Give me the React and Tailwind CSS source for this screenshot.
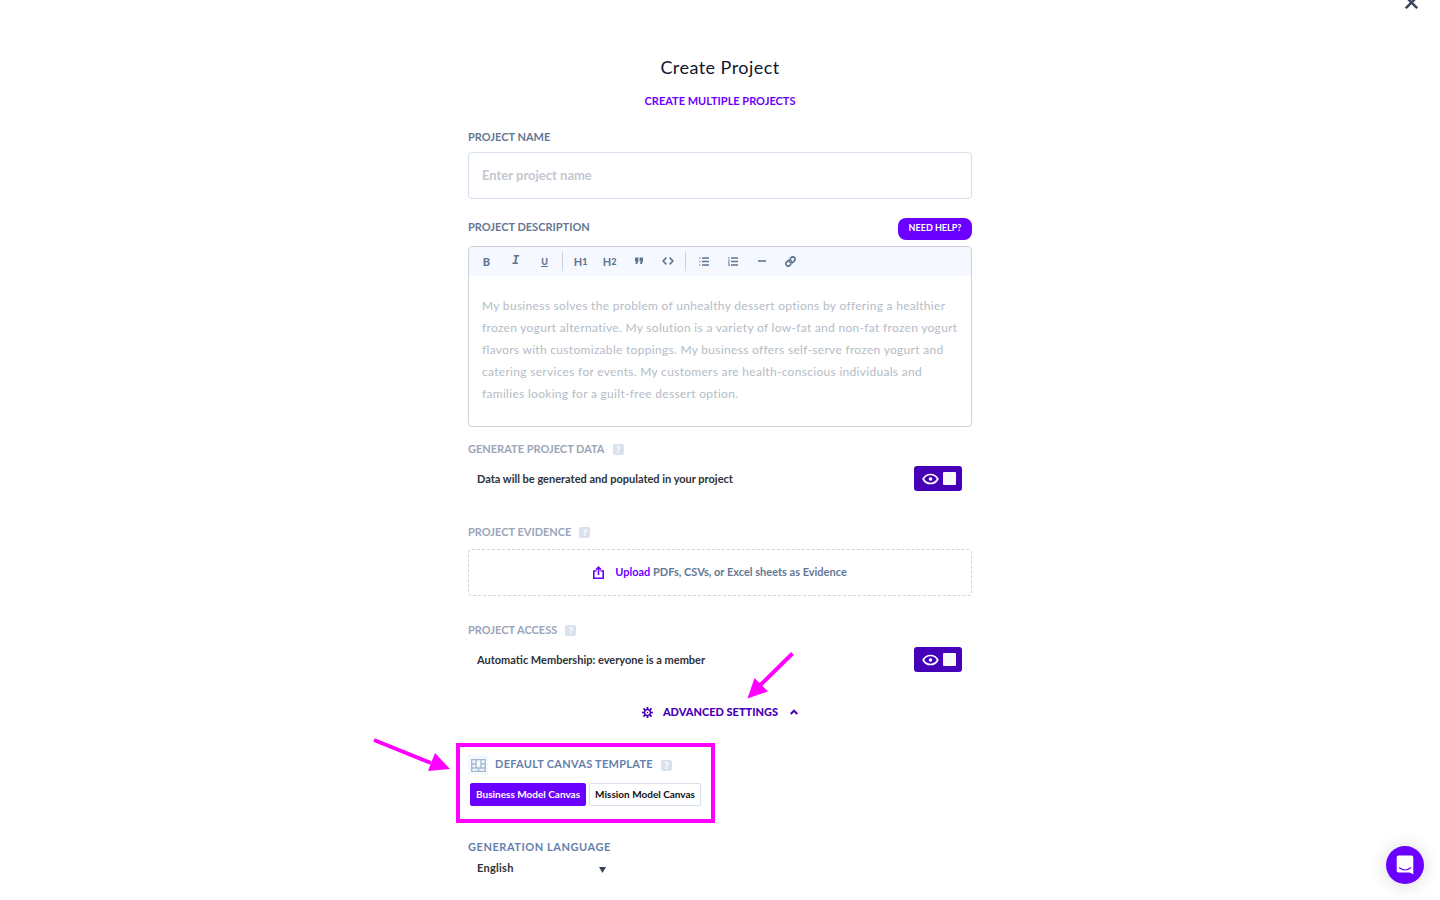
import { useState } from 'react';

const DESCRIPTION_HINT = [
  'My business solves the problem of unhealthy dessert options by offering a healthier',
  'frozen yogurt alternative. My solution is a variety of low-fat and non-fat frozen yogurt',
  'flavors with customizable toppings. My business offers self-serve frozen yogurt and',
  'catering services for events. My customers are health-conscious individuals and',
  'families looking for a guilt-free dessert option.',
].join('\n');

function HelpBadge({ topic }) {
  return (
    <button type="button" aria-label={`Help: ${topic}`} className="flex size-[11px] items-center justify-center rounded-[2px] bg-[#d9e2ec] text-[10px] leading-none font-black text-white">
      ?
    </button>
  );
}

function ToolButton({ label, children }) {
  return (
    <button type="button" aria-label={label} className="flex h-7 w-[29px] items-center justify-center text-[11px] leading-none font-bold text-[#5e7490]">
      {children}
    </button>
  );
}

function Divider() {
  return <div className="mx-[3px] h-[19px] w-px bg-[#cbd2dc]" />;
}

function Toolbar() {
  return (
    <div className="flex h-[29px] items-center rounded-t bg-[#f5f9ff] pb-px pl-[3px]">
      <ToolButton label="Bold"><span className="font-black">B</span></ToolButton>
      <ToolButton label="Italic"><span className="font-['Liberation_Mono'] text-[12px] leading-[14px] italic">I</span></ToolButton>
      <ToolButton label="Underline"><span className="text-[9px] font-black underline underline-offset-1">U</span></ToolButton>
      <Divider />
      <ToolButton label="Heading 1">H<span className="text-[9px] leading-[13px] font-black">1</span></ToolButton>
      <ToolButton label="Heading 2">H<span className="text-[9px] leading-[13px] font-black">2</span></ToolButton>
      <ToolButton label="Quote">
        <svg width="10" height="8" viewBox="0 0 10 8" fill="currentColor">
          <path d="M1 0.5h3.4v3.7L3.2 7H1.3l0.9-2.6H1zM5.6 0.5H9v3.7L7.8 7H5.9l0.9-2.6H5.6z" />
        </svg>
      </ToolButton>
      <ToolButton label="Code">
        <svg width="12" height="8" viewBox="0 0 12 8" fill="none" stroke="currentColor" strokeWidth="1.6">
          <path d="M4.4 0.6L1.1 4l3.3 3.4M7.6 0.6L10.9 4L7.6 7.4" />
        </svg>
      </ToolButton>
      <Divider />
      <ToolButton label="Bulleted list">
        <svg width="10" height="9" viewBox="0 0 10 9" stroke="currentColor" strokeWidth="1.4">
          <path d="M3 1h7M3 4.5h7M3 8h7" />
          <path d="M0 1h1.4M0 4.5h1.4M0 8h1.4" opacity="0.6" />
        </svg>
      </ToolButton>
      <ToolButton label="Numbered list">
        <svg width="10" height="9" viewBox="0 0 10 9" fill="none" stroke="currentColor" strokeWidth="1.4">
          <path d="M3 1h7M3 4.5h7M3 8h7" />
          <path d="M0 0.4h1v2M0 3.4h1.4L0.2 5.6h1.4M0 6.8h1.4v2H0M0.4 7.8h1" strokeWidth="0.7" />
        </svg>
      </ToolButton>
      <ToolButton label="Divider">
        <span className="h-[2px] w-2 bg-[#7d90a9]" />
      </ToolButton>
      <ToolButton label="Link">
        <svg width="11" height="11" viewBox="0 0 24 24" fill="none" stroke="currentColor" strokeWidth="3.6" strokeLinecap="round">
          <path d="M10 13a5 5 0 0 0 7.54.54l3-3a5 5 0 0 0-7.07-7.07l-1.72 1.71" />
          <path d="M14 11a5 5 0 0 0-7.54-.54l-3 3a5 5 0 0 0 7.07 7.07l1.71-1.71" />
        </svg>
      </ToolButton>
    </div>
  );
}

function SectionTitle({ children }) {
  return (
    <div className="flex h-4 items-center gap-2">
      <h2 className="text-[11px] leading-4 font-bold text-[#9aa5b8]">{children}</h2>
      <HelpBadge topic={children} />
    </div>
  );
}

function VisibilityToggle({ label }) {
  const [on, setOn] = useState(true);
  return (
    <div className="mt-[9px] flex h-[25px] items-center justify-between pr-2.5 pl-[9px]">
      <span className="text-[11px] leading-4 font-bold text-[#2f3135]">{label}</span>
      <button
        type="button"
        role="switch"
        aria-checked={on}
        aria-label={label}
        onClick={() => setOn(!on)}
        className="flex h-[25px] w-12 items-center justify-end gap-1 rounded-[3px] bg-[#4600b8] pr-1.5"
      >
        <svg width="17" height="12" viewBox="0 0 17 12" fill="none" stroke="white" strokeWidth="1.7">
          <path d="M1.2 6C2.7 3.2 5.3 1.5 8.5 1.5S14.3 3.2 15.8 6c-1.5 2.8-4.1 4.5-7.3 4.5S2.7 8.8 1.2 6z" />
          <circle cx="8.5" cy="6" r="1.8" fill="white" stroke="none" />
        </svg>
        <span className="size-[13px] rounded-[1px] bg-[#f8f8fa]" />
      </button>
    </div>
  );
}

function CanvasIcon() {
  return (
    <span className="flex size-5 items-center justify-center bg-[#f5f9ff]">
      <svg width="15" height="13" viewBox="0 0 15 13" fill="none" stroke="#a3b8d0" strokeWidth="1.3">
        <path d="M0.7 0.7h13.6v11.6H0.7zM0.7 9h13.6M5 0.7V9M10 0.7V9M7.5 9v3.3M0.7 5H5M10 5h4.3" />
      </svg>
    </span>
  );
}

export default function App() {
  const [template, setTemplate] = useState('Business Model Canvas');

  return (
    <div className="relative min-h-screen overflow-hidden bg-white px-4 font-['Lato','Open_Sans',sans-serif]">
      <button type="button" aria-label="Close" className="absolute -top-1 right-[22px] text-[#39425c]">
        <svg width="13" height="13" viewBox="0 0 13 13" fill="none" stroke="currentColor" strokeWidth="2.4">
          <path d="M0.8 0.8l11.4 11.4M12.2 0.8L0.8 12.2" />
        </svg>
      </button>

      <form className="mx-auto w-full max-w-[504px] pt-[53px] pb-6">
        <h1 className="text-center text-lg leading-7 tracking-wide text-[#12152e]">Create Project</h1>
        <a href="#multiple" className="mt-3 block text-center text-[11px] leading-4 font-bold text-[#6a00ff]">
          CREATE MULTIPLE PROJECTS
        </a>

        <label htmlFor="name" className="mt-5 block text-[11px] leading-4 font-bold text-[#647796]">PROJECT NAME</label>
        <input
          id="name"
          placeholder="Enter project name"
          className="mt-[7px] block h-[47px] w-full rounded border border-[#d5e0ec] px-[13px] pb-0.5 text-[13px] font-bold placeholder:text-[#c4c7cf]"
        />

        <div className="mt-[19px] flex items-start justify-between">
          <label htmlFor="description" className="text-[11px] leading-[18px] font-bold text-[#647796]">PROJECT DESCRIPTION</label>
          <button type="button" className="h-[22px] w-[74px] rounded-lg bg-[#6a00ff] pb-0.5 text-[9px] leading-5 font-bold text-white">NEED HELP?</button>
        </div>
        <div className="mt-[6px] rounded border border-[#cbd2dc]">
          <Toolbar />
          <textarea
            id="description"
            placeholder={DESCRIPTION_HINT}
            className="block h-[150px] w-full resize-none overflow-hidden pt-[19px] pr-1 pl-[13px] text-xs leading-[22px] tracking-wide placeholder:text-[#b4bcc6]"
          />
        </div>

        <div className="mt-[14px]">
          <SectionTitle>GENERATE PROJECT DATA</SectionTitle>
          <VisibilityToggle label="Data will be generated and populated in your project" />
        </div>

        <div className="mt-[33px]">
          <SectionTitle>PROJECT EVIDENCE</SectionTitle>
          <button type="button" className="mt-[9px] flex h-[47px] w-full items-center justify-center gap-[11px] rounded border border-dashed border-[#d0d3d8] text-[11px] font-bold text-[#647796]">
            <svg width="11" height="13" viewBox="0 0 11 13" fill="none" stroke="#6a00ff" strokeWidth="1.6">
              <path d="M3.4 5H0.8v7.2h9.4V5H7.6M5.5 9V1.4M3.1 3.6l2.4-2.4l2.4 2.4" />
            </svg>
            <span><span className="text-[#6a00ff]">Upload</span> PDFs, CSVs, or Excel sheets as Evidence</span>
          </button>
        </div>

        <div className="mt-[26px]">
          <SectionTitle>PROJECT ACCESS</SectionTitle>
          <VisibilityToggle label="Automatic Membership: everyone is a member" />
        </div>

        <div className="relative mx-auto mt-8 w-fit">
          <button type="button" aria-expanded="true" className="flex h-4 items-center text-[11px] leading-4 font-black text-[#4600b8]">
            <svg width="11" height="11" viewBox="0 0 12 12" fill="none" stroke="currentColor">
              <circle cx="6" cy="6" r="3.3" strokeWidth="1.7" />
              <circle cx="6" cy="6" r="0.8" fill="currentColor" stroke="none" />
              <path d="M6 0v2.4M6 9.6V12M0 6h2.4M9.6 6H12M1.6 1.6l1.8 1.8M8.6 8.6l1.8 1.8M1.6 10.4l1.8-1.8M8.6 3.4l1.8-1.8" strokeWidth="1.9" />
            </svg>
            <span className="ml-2.5">ADVANCED SETTINGS</span>
            <svg className="ml-3" width="8" height="6" viewBox="0 0 8 6" fill="none" stroke="currentColor" strokeWidth="2">
              <path d="M0.7 5L4 1.7L7.3 5" />
            </svg>
          </button>
          <svg className="absolute right-1 bottom-[21px]" width="47" height="47" viewBox="0 0 47 47">
            <path d="M45.5 1.5L13 33.5" stroke="#ff00ff" strokeWidth="4" />
            <path d="M0.5 46.5L7.5 26L21 39.5z" fill="#ff00ff" />
          </svg>
        </div>

        <section className="relative mt-[23px] -ml-3 w-fit border-4 border-[#ff00ff] pt-2 pr-2.5 pb-[13px] pl-2">
          <svg className="absolute top-[-9px] right-full mr-[9px]" width="78" height="36" viewBox="0 0 78 36">
            <path d="M1 2L58 25" stroke="#ff00ff" strokeWidth="4" />
            <path d="M77 31L55 33L62 15z" fill="#ff00ff" />
          </svg>
          <div className="flex h-5 items-center">
            <CanvasIcon />
            <h2 className="ml-[7px] pb-0.5 text-[11px] leading-4 font-bold tracking-wide text-[#647fae]">DEFAULT CANVAS TEMPLATE</h2>
            <span className="ml-2"><HelpBadge topic="Default canvas template" /></span>
          </div>
          <div className="mt-2 ml-0.5 flex gap-[3px]">
            {['Business Model Canvas', 'Mission Model Canvas'].map((name) => (
              <button
                key={name}
                type="button"
                aria-pressed={template === name}
                onClick={() => setTemplate(name)}
                className={`h-[23px] rounded-[2px] border px-[5px] pb-0.5 text-[10px] leading-5 font-bold ${template === name ? 'border-[#6a00ff] bg-[#6a00ff] text-white' : 'border-[#d5e0ec] bg-white text-[#111111]'}`}
              >
                {name}
              </button>
            ))}
          </div>
        </section>

        <label htmlFor="language" className="mt-4 block text-[11px] leading-4 font-bold tracking-wider text-[#647fae]">GENERATION LANGUAGE</label>
        <div className="relative mt-[5px] w-[138px]">
          <select id="language" className="block h-4 w-full appearance-none bg-transparent pl-[9px] text-[11px] leading-4 font-bold tracking-wide text-[#2f3135]">
            <option>English</option>
          </select>
          <svg className="pointer-events-none absolute top-[7px] right-0" width="7" height="6" viewBox="0 0 7 6" fill="#39425c">
            <path d="M0 0h7L3.5 6z" />
          </svg>
        </div>
      </form>

      <button type="button" aria-label="Open chat" className="fixed right-4 bottom-4 flex size-[38px] items-center justify-center rounded-full bg-[#6a00ff] shadow-[0_1px_18px_rgba(0,0,0,0.16)]">
        <svg width="18" height="20" viewBox="0 0 18 20">
          <path d="M2.5 0.5h13A1.8 1.8 0 0 1 17.3 2.3V19.3L13.5 17.5h-11A1.8 1.8 0 0 1 0.7 15.7V2.3A1.8 1.8 0 0 1 2.5 0.5z" fill="white" />
          <path d="M3.3 12.8c3.4 2.6 8 2.6 11.4 0" fill="none" stroke="#6a00ff" strokeWidth="1.1" strokeLinecap="round" />
        </svg>
      </button>
    </div>
  );
}
